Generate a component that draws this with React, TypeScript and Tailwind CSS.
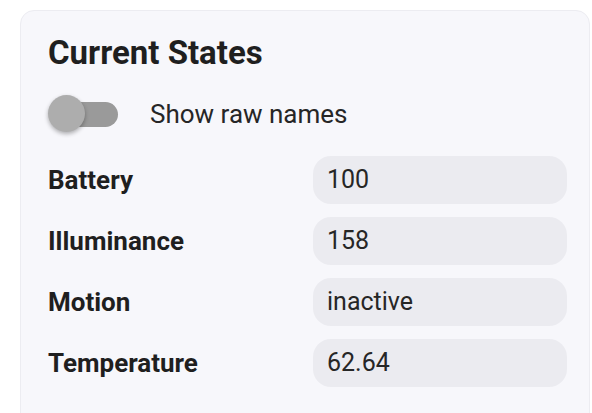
const rows: [string, string][] = [
  ["Battery", "100"],
  ["Illuminance", "158"],
  ["Motion", "inactive"],
  ["Temperature", "62.64"],
];

export default function App() {
  return (
    <div className="h-[413px] overflow-hidden bg-white pl-5 pt-[10px] font-['Roboto',sans-serif]">
      <div className="w-[570px] rounded-t-[14px] border border-[#ececf1] bg-[#f7f7fb] pb-10 pl-[27px] pr-[22px] pt-[22px]">
        <h2 className="text-[33px] font-bold leading-[40px] text-[#1f1f1f]">
          Current States
        </h2>

        <div className="mt-[16px] flex h-[50px] items-center">
          <div className="relative h-[38px] w-[72px]">
            <div className="absolute left-[2px] top-[7px] h-[25px] w-[68px] rounded-full bg-[#9a9a9a]" />
            <div className="absolute left-0 top-0 h-[37px] w-[37px] rounded-full bg-[#adadad] shadow-[0_2px_4px_rgba(0,0,0,0.3)]" />
          </div>
          <span className="ml-[30px] text-[26px] text-[#262626]">
            Show raw names
          </span>
        </div>

        <div className="mt-[17px] grid grid-cols-[265px_254px] gap-y-[13px]">
          {rows.map(([label, value]) => (
            <div key={label} className="contents">
              <div className="flex h-[48px] items-center text-[26px] font-bold text-[#1f1f1f]">
                {label}
              </div>
              <div className="flex h-[48px] items-center rounded-[18px] bg-[#ebebf0] px-[14px] text-[25px] text-[#262626]">
                {value}
              </div>
            </div>
          ))}
        </div>
      </div>
    </div>
  );
}
